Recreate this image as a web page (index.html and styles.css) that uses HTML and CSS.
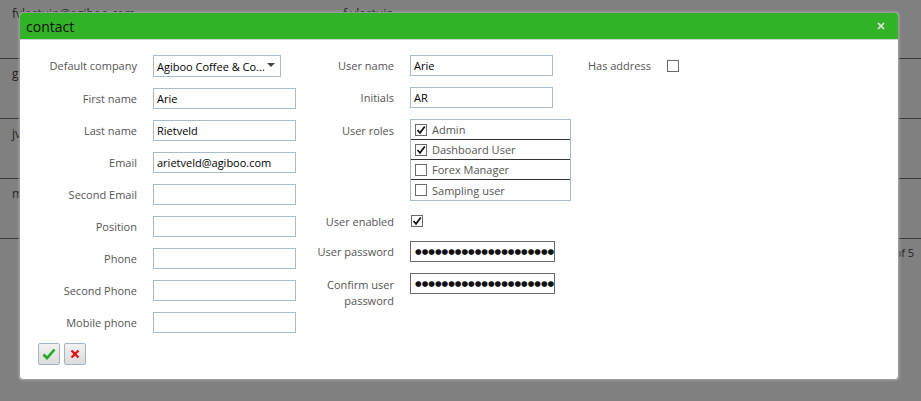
FILE: index.html
```html
<!DOCTYPE html>
<html>
<head>
<meta charset="utf-8">
<link rel="stylesheet" href="styles.css">
</head>
<body>
<div class="page">
  <div class="bg-table">
    <div class="bg-row"><span class="c1">fvlastuin@agiboo.com</span><span class="c2">f.vlastuin</span></div>
    <div class="bg-row"><span class="c1">g</span></div>
    <div class="bg-row"><span class="c1">jv</span></div>
    <div class="bg-row"><span class="c1">m</span></div>
    <div class="pager">Page 1 of 5</div>
  </div>

  <div class="dialog">
    <div class="dlg-head">
      <span class="dlg-title">contact</span>
      <span class="dlg-close"><svg width="8" height="8" viewBox="0 0 8 8"><path d="M1 1 L7 7 M7 1 L1 7" stroke="#dfe9df" stroke-width="1.7" fill="none"/></svg></span>
    </div>
    <div class="dlg-body">
      <div class="cols">
        <div class="col col-left">
          <label class="lbl">Default company</label>
          <div class="select"><span class="sel-text">Agiboo Coffee &amp; Co...</span><span class="caret"></span></div>
          <label class="lbl">First name</label>
          <div class="input">Arie</div>
          <label class="lbl">Last name</label>
          <div class="input">Rietveld</div>
          <label class="lbl">Email</label>
          <div class="input">arietveld@agiboo.com</div>
          <label class="lbl">Second Email</label>
          <div class="input"></div>
          <label class="lbl">Position</label>
          <div class="input"></div>
          <label class="lbl">Phone</label>
          <div class="input"></div>
          <label class="lbl">Second Phone</label>
          <div class="input"></div>
          <label class="lbl">Mobile phone</label>
          <div class="input"></div>
        </div>

        <div class="col col-mid">
          <label class="lbl">User name</label>
          <div class="input">Arie</div>
          <label class="lbl">Initials</label>
          <div class="input">AR</div>
          <label class="lbl lbl-top">User roles</label>
          <div class="roles">
            <div class="role"><span class="cb checked"><svg width="10" height="10" viewBox="0 0 10 10"><path d="M1.5 5 L4 7.8 L8.8 1.5" stroke="#111" stroke-width="1.7" fill="none"/></svg></span>Admin</div>
            <div class="role"><span class="cb checked"><svg width="10" height="10" viewBox="0 0 10 10"><path d="M1.5 5 L4 7.8 L8.8 1.5" stroke="#111" stroke-width="1.7" fill="none"/></svg></span>Dashboard User</div>
            <div class="role"><span class="cb"></span>Forex Manager</div>
            <div class="role"><span class="cb"></span>Sampling user</div>
          </div>
          <label class="lbl lbl-enabled">User enabled</label>
          <div class="enabled"><span class="cb checked"><svg width="10" height="10" viewBox="0 0 10 10"><path d="M1.5 5 L4 7.8 L8.8 1.5" stroke="#111" stroke-width="1.7" fill="none"/></svg></span></div>
          <label class="lbl">User password</label>
          <div class="pwd">●●●●●●●●●●●●●●●●●●●●●</div>
          <label class="lbl lbl-top">Confirm user password</label>
          <div class="pwd pwd-top">●●●●●●●●●●●●●●●●●●●●●</div>
        </div>

        <div class="col col-right">
          <label class="lbl nowrap">Has address</label>
          <div class="addr"><span class="cb"></span></div>
        </div>
      </div>
      <div class="actions">
        <button class="btn" type="button"><svg width="14" height="12" viewBox="0 0 14 12"><path d="M1.5 6.5 L5 10 L12.5 1.5" stroke="#1faa1f" stroke-width="2.6" fill="none"/></svg></button>
        <button class="btn" type="button"><svg width="10" height="10" viewBox="0 0 10 10"><path d="M1.5 1.5 L8.5 8.5 M8.5 1.5 L1.5 8.5" stroke="#e01010" stroke-width="2.3" fill="none"/></svg></button>
      </div>
    </div>
  </div>
</div>
</body>
</html>
```

FILE: styles.css
```css
* { box-sizing: border-box; }
html, body { margin: 0; padding: 0; }
body {
  background: #808080;
  font-family: "Open Sans", "Noto Sans", sans-serif;
  font-size: 11px;
  width: 921px;
  height: 401px;
  overflow: hidden;
}
.page { position: relative; width: 921px; height: 401px; }

.bg-table { color: #1e1e1e; font-size: 12px; }
.bg-row {
  height: 60px;
  border-bottom: 1px solid #3a3a3a;
  padding-top: 6px;
  display: flex;
}
.bg-row:first-child { height: 60px; margin-top: -1px; }
.c1 { width: 343px; padding-left: 12px; white-space: nowrap; }
.pager { text-align: right; padding: 6px 7px 0 0; font-size: 11px; }

.dialog {
  position: absolute;
  left: 19px;
  top: 13px;
  width: 880px;
  height: 368px;
  background: #fff;
  border: 1px solid #9a9a9a;
  border-radius: 4px;
  box-shadow: 0 0 3px rgba(255,255,255,0.35);
  overflow: hidden;
}
.dlg-head {
  height: 27px;
  background: #32b227;
  border-bottom: 1px solid #c9d9c9;
  display: flex;
  align-items: center;
  justify-content: space-between;
  padding: 0 13px 0 6px;
}
.dlg-title { font-size: 14px; color: #111; }
.dlg-close { display: flex; }

.dlg-body { padding: 15px 0 0 17px; }
.cols { display: flex; gap: 18px; align-items: flex-start; }
.col {
  display: grid;
  column-gap: 16px;
  row-gap: 11px;
  align-items: center;
}
.col-left { grid-template-columns: 100px 143px; }
.col-mid { grid-template-columns: 80px 161px; }
.col-right { grid-template-columns: 74px 12px; margin-left: -12px; padding-top: 3px; }

.lbl {
  color: #555;
  text-align: right;
  line-height: 16px;
}
.nowrap { white-space: nowrap; }
.lbl-top { align-self: start; padding-top: 4px; }
.lbl-enabled { padding-top: 2px; }

.input {
  height: 21px;
  border: 1px solid #a7bccb;
  color: #000;
  padding: 0 3px;
  line-height: 19px;
  width: 143px;
}
.select {
  height: 22px;
  width: 128px;
  border: 1px solid #a7bccb;
  display: flex;
  align-items: center;
  justify-content: space-between;
  padding: 0 5px 0 3px;
  color: #000;
}
.caret {
  width: 0; height: 0;
  border-left: 4px solid transparent;
  border-right: 4px solid transparent;
  border-top: 4px solid #444;
  margin-bottom: 3px;
}

.roles {
  border: 1px solid #a7bccb;
  width: 161px;
}
.role {
  height: 20px;
  display: flex;
  align-items: center;
  gap: 5px;
  padding-left: 4px;
  color: #555;
  border-bottom: 1px solid #333;
}
.role:last-child { border-bottom: none; }

.cb {
  width: 12px;
  height: 12px;
  border: 1px solid #6a6a6a;
  background: #fff;
  display: inline-flex;
  align-items: center;
  justify-content: center;
  flex: none;
}
.enabled { height: 16px; display: flex; align-items: flex-start; padding-top: 2px; padding-left: 1px; }
.addr { display: flex; }

.pwd {
  width: 145px;
  height: 21px;
  border: 1px solid #6a6a6a;
  font-family: "DejaVu Sans", sans-serif;
  font-size: 7.6px;
  letter-spacing: 0;
  line-height: 19px;
  padding-left: 4px;
  color: #111;
  white-space: nowrap;
}
.pwd-top { align-self: start; }

.actions { display: flex; gap: 4px; margin: 10px 0 0 1px; }
.btn {
  width: 22px;
  height: 22px;
  padding: 0;
  border: 1px solid #a3b4c2;
  border-radius: 2px;
  background: linear-gradient(#f2f2f2, #dcdcdc);
  display: flex;
  align-items: center;
  justify-content: center;
}
```
